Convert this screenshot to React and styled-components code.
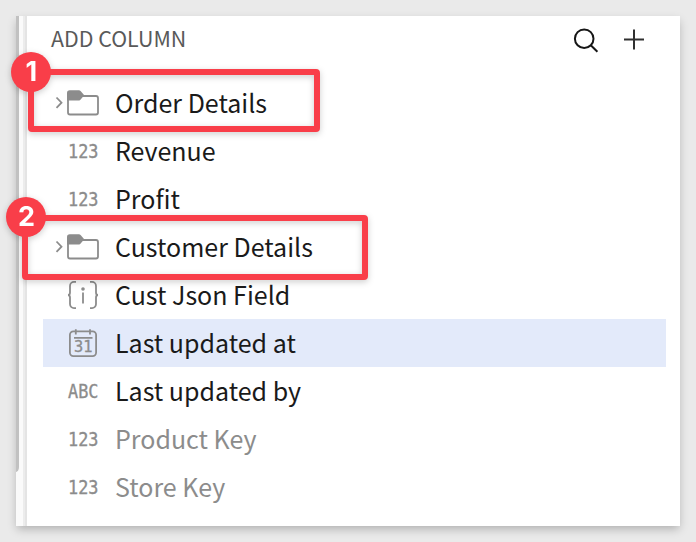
import React from "react";
import styled, { createGlobalStyle } from "styled-components";

const GlobalStyle = createGlobalStyle`
  * { box-sizing: border-box; }
  body {
    margin: 0;
    background: #eaeaea;
    font-family: "Noto Sans CJK SC", "Noto Sans", sans-serif;
  }
`;

const Page = styled.main`
  width: 696px;
  height: 542px;
  padding: 16px;
  overflow: hidden;
  background: #eaeaea;
`;

const Window = styled.div`
  display: flex;
  width: 664px;
  height: 510px;
  background: #fff;
  box-shadow: 0 4px 9px -1px rgba(0, 0, 0, 0.25);
`;

const ScrollTrack = styled.div`
  width: 11px;
  background: linear-gradient(to right, #fafafa 7px, #ececec 7px, #ececec 9px, #e4e4e4 9px);
`;

const ScrollThumb = styled.div`
  width: 3px;
  height: 456px;
  background: #c1c1c1;
  border-bottom-right-radius: 3px 5px;
`;

const Panel = styled.section`
  flex: 1;
  padding: 0 14px 0 16px;
`;

const Header = styled.header`
  display: flex;
  align-items: center;
  height: 63px;
  padding: 0 21px 16px 8px;
`;

const Title = styled.h1`
  flex: 1;
  margin: 0;
  padding-bottom: 4px;
  color: #595959;
  font-size: 21.4px;
  font-weight: 400;
  line-height: 30px;
`;

const Actions = styled.div`
  display: flex;
  align-items: center;
  gap: 24px;
`;

const ActionButton = styled.button`
  display: flex;
  padding: 0;
  border: 0;
  background: none;
`;

const List = styled.ul`
  margin: 0;
  padding: 0;
  list-style: none;
`;

const Row = styled.li`
  position: relative;
  display: flex;
  align-items: center;
  height: 48px;
  background: ${(p) => (p.$selected ? "#e3eafa" : "transparent")};
`;

const IconCell = styled.span`
  display: flex;
  width: 72px;
  height: 48px;
`;

const Label = styled.span`
  padding-bottom: 2px;
  color: ${(p) => (p.$muted ? "#8c8c8c" : "#1a1a1a")};
  font-size: 25px;
  line-height: 46px;
  white-space: nowrap;
`;

const Callout = styled.div`
  position: absolute;
  z-index: 1;
  top: ${(p) => p.$top}px;
  left: ${(p) => p.$left}px;
  width: ${(p) => p.$width}px;
  height: ${(p) => p.$height}px;
  border: 6px solid #f93e49;
  border-radius: 4px;
  filter: drop-shadow(0 2px 3px rgba(0, 0, 0, 0.2));
`;

const Badge = styled.span`
  position: absolute;
  top: ${(p) => p.$top}px;
  left: ${(p) => p.$left}px;
  display: flex;
  align-items: center;
  justify-content: center;
  width: 40px;
  height: 40px;
  border-radius: 50%;
  background: #f93e49;
  color: #fff;
  font: 700 27px/40px Inter, sans-serif;
`;

const TypeText = styled.text`
  fill: #8c8c8c;
  stroke: #8c8c8c;
  stroke-width: 0.35px;
  font-family: "DejaVu Sans Mono", monospace;
  font-size: ${(p) => p.$size}px;
`;

const Icon = ({ children }) => (
  <svg width="72" height="48" viewBox="0 0 72 48" fill="none" stroke="#8c8c8c" strokeWidth="1.8">
    {children}
  </svg>
);

const FolderIcon = () => (
  <Icon>
    <path d="M13.5 18.5l5 5.2-5 5.2" />
    <path d="M25 20v13.5a2 2 0 0 0 2 2h26a2 2 0 0 0 2-2V19a2 2 0 0 0-2-2H41" />
    <path
      d="M24 21.5v-7.5a2.8 2.8 0 0 1 2.8-2.8h8.5c1.2 0 1.8.3 2.5 1.1L41 16h1v2h-2.2l-2.2 2.4c-.6.7-1 1.1-1.8 1.1z"
      fill="#8c8c8c"
      stroke="none"
    />
  </Icon>
);

const TypeIcon = ({ text }) => (
  <Icon>
    <TypeText x="25" y="31" textLength="30.4" lengthAdjust="spacingAndGlyphs" $size={19}>
      {text}
    </TypeText>
  </Icon>
);

const JsonIcon = () => (
  <Icon>
    <path d="M33 10.9h-2a4 4 0 0 0-4 4v6.5q0 2.6-2 2.6 2 0 2 2.6v6.5a4 4 0 0 0 4 4h2M47 10.9h2a4 4 0 0 1 4 4v6.5q0 2.6 2 2.6-2 0-2 2.6v6.5a4 4 0 0 1-4 4h-2" />
    <path d="M40 21.5v11" />
    <circle cx="40" cy="18" r="1.8" fill="#8c8c8c" stroke="none" />
  </Icon>
);

const CalendarIcon = () => (
  <Icon>
    <rect x="26.9" y="12.3" width="26.2" height="24.8" rx="3.5" />
    <path d="M32.8 10.3v5.2M47 10.3v5.2M31 18.8h18.5" />
    <TypeText x="31" y="33.4" textLength="18.5" lengthAdjust="spacingAndGlyphs" $size={15}>
      31
    </TypeText>
  </Icon>
);

const SearchIcon = () => (
  <svg width="26" height="26" viewBox="0 0 26 26" fill="none" stroke="#161616" strokeWidth="2">
    <circle cx="11.2" cy="11.7" r="9.3" />
    <path d="M17.8 18.2l6.6 6.6" />
  </svg>
);

const PlusIcon = () => (
  <svg width="22" height="22" viewBox="0 0 22 22" stroke="#303030" strokeWidth="2">
    <path d="M11 .5v20M1 10.5h20" />
  </svg>
);

const columns = [
  {
    label: "Order Details",
    icon: <FolderIcon />,
    callout: { number: 1, box: [-15, -10, 292, 63], badge: [-22.6, -22.8] },
  },
  { label: "Revenue", icon: <TypeIcon text="123" /> },
  { label: "Profit", icon: <TypeIcon text="123" /> },
  {
    label: "Customer Details",
    icon: <FolderIcon />,
    callout: { number: 2, box: [-21, -8, 346, 65], badge: [-21.6, -23.8] },
  },
  { label: "Cust Json Field", icon: <JsonIcon /> },
  { label: "Last updated at", icon: <CalendarIcon />, selected: true },
  { label: "Last updated by", icon: <TypeIcon text="ABC" /> },
  { label: "Product Key", icon: <TypeIcon text="123" />, muted: true },
  { label: "Store Key", icon: <TypeIcon text="123" />, muted: true },
];

export default function App() {
  return (
    <>
      <GlobalStyle />
      <Page>
        <Window>
          <ScrollTrack>
            <ScrollThumb />
          </ScrollTrack>
          <Panel>
            <Header>
              <Title>ADD COLUMN</Title>
              <Actions>
                <ActionButton aria-label="Search"><SearchIcon /></ActionButton>
                <ActionButton aria-label="Add"><PlusIcon /></ActionButton>
              </Actions>
            </Header>
            <List>
              {columns.map(({ label, icon, callout, selected, muted }) => (
                <Row key={label} $selected={selected}>
                  <IconCell>{icon}</IconCell>
                  <Label $muted={muted}>{label}</Label>
                  {callout && (
                    <Callout
                      $left={callout.box[0]}
                      $top={callout.box[1]}
                      $width={callout.box[2]}
                      $height={callout.box[3]}
                    >
                      <Badge $left={callout.badge[0]} $top={callout.badge[1]}>{callout.number}</Badge>
                    </Callout>
                  )}
                </Row>
              ))}
            </List>
          </Panel>
        </Window>
      </Page>
    </>
  );
}
